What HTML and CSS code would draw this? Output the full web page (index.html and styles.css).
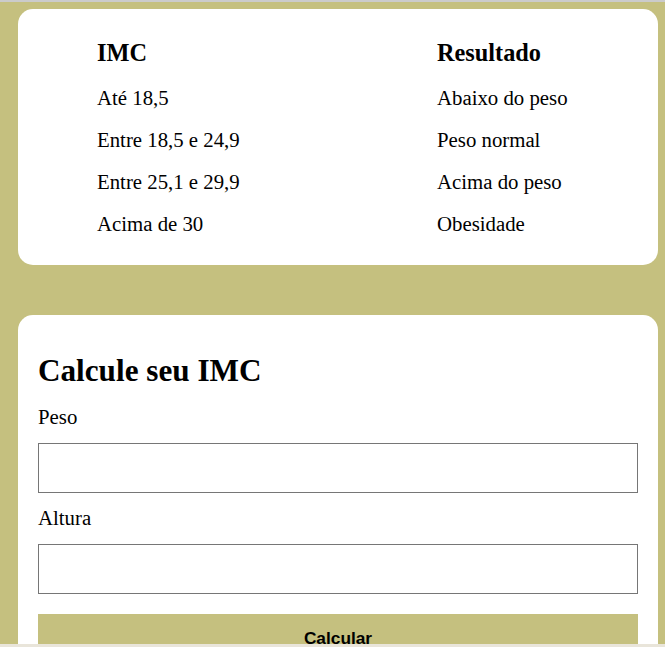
FILE: index.html
```html
<!DOCTYPE html>
<html lang="pt">
<head>
<meta charset="utf-8">
<title>Calculadora de IMC</title>
<link rel="stylesheet" href="styles.css">
</head>
<body>
<div class="page">
  <section class="card table-card">
    <div class="grid">
      <div class="th">IMC</div>
      <div class="th">Resultado</div>
      <div class="td">Até 18,5</div>
      <div class="td">Abaixo do peso</div>
      <div class="td">Entre 18,5 e 24,9</div>
      <div class="td">Peso normal</div>
      <div class="td">Entre 25,1 e 29,9</div>
      <div class="td">Acima do peso</div>
      <div class="td">Acima de 30</div>
      <div class="td">Obesidade</div>
    </div>
  </section>
  <section class="card form-card">
    <h2 class="title">Calcule seu IMC</h2>
    <label class="label" for="peso">Peso</label>
    <input class="field" id="peso" type="text">
    <label class="label" for="altura">Altura</label>
    <input class="field" id="altura" type="text">
    <button class="btn" type="button">Calcular</button>
  </section>
</div>
<div class="bottom-strip"></div>
</body>
</html>
```
FILE: styles.css
```css
html, body {
  margin: 0;
  padding: 0;
}
body {
  background: #c5c07f;
  font-family: "Liberation Serif", "Times New Roman", serif;
  color: #000;
  border-top: 2px solid #cbcbcb;
  overflow: hidden;
}
.page {
  padding: 7px 7px 0 18px;
  display: flex;
  flex-direction: column;
  gap: 50px;
}
.card {
  background: #fff;
  border-radius: 15px;
  width: 640px;
  box-sizing: border-box;
}
.table-card {
  padding: 20px 0 21px 79px;
}
.grid {
  display: grid;
  grid-template-columns: 340px auto;
  grid-template-rows: 47px;
  grid-auto-rows: 42px;
}
.th {
  font-size: 24.3px;
  font-weight: bold;
  line-height: 47px;
}
.td {
  font-size: 20.8px;
  line-height: 43px;
}
.form-card {
  padding: 39px 20px 20px 20px;
  display: flex;
  flex-direction: column;
  height: 400px;
}
.title {
  margin: 0 0 16px 0;
  font-size: 31.2px;
  font-weight: bold;
  line-height: 34.5px;
}
.label {
  font-size: 20.8px;
  line-height: 23px;
  margin-bottom: 15px;
}
.field {
  height: 50px;
  box-sizing: border-box;
  border: 1px solid #767676;
  border-radius: 0;
  margin: 0 0 13px 0;
  padding: 0 4px;
  font-size: 17px;
  background: #fff;
}
#altura {
  margin-bottom: 20px;
}
.btn {
  height: 50px;
  border: none;
  background: #c5c07f;
  font-family: "Liberation Sans", Arial, sans-serif;
  font-weight: bold;
  font-size: 17.3px;
  color: #000;
  padding: 0;
}
.bottom-strip {
  position: fixed;
  left: 0;
  right: 0;
  bottom: 0;
  height: 3px;
  background: #e9e5da;
}
```
